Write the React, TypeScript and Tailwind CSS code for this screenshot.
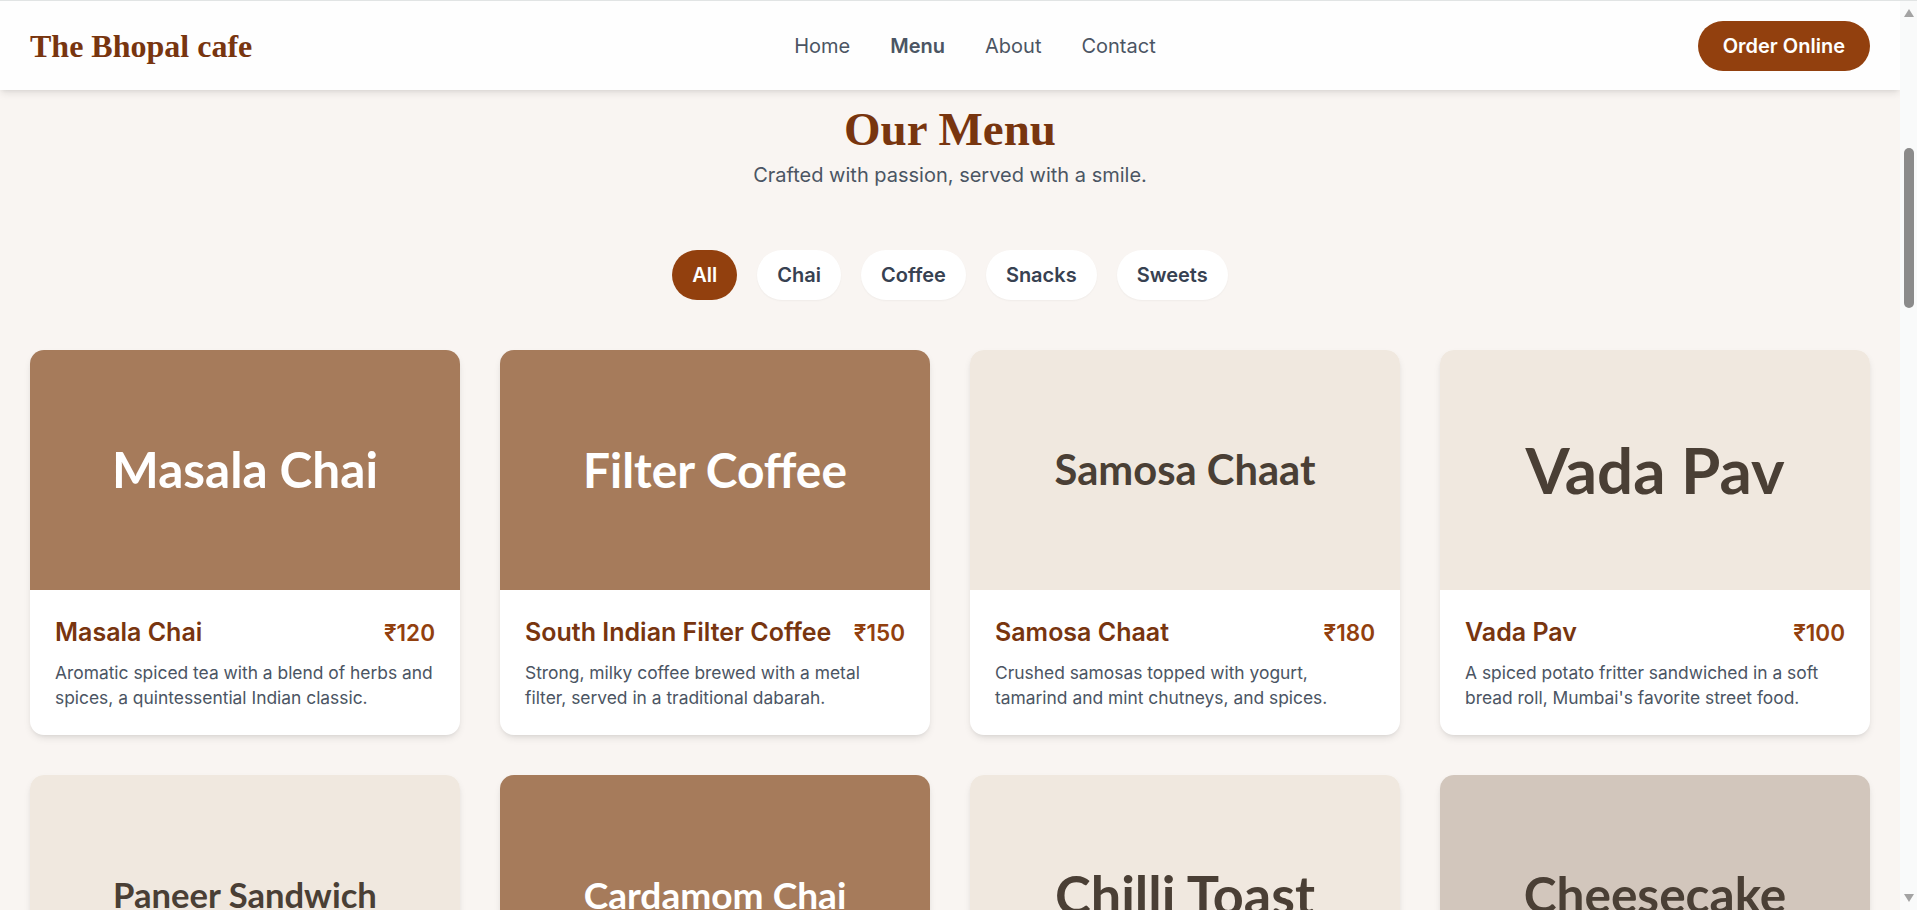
import React, { useMemo } from "react";

type Item = {
  name: string;
  title: string;
  price: number;
  desc: string;
  bg: string;
  fg: string;
};

const items: Item[] = [
  {
    name: "Masala Chai",
    title: "Masala Chai",
    price: 120,
    desc: "Aromatic spiced tea with a blend of herbs and spices, a quintessential Indian classic.",
    bg: "#a67b5b",
    fg: "#ffffff",
  },
  {
    name: "Filter Coffee",
    title: "South Indian Filter Coffee",
    price: 150,
    desc: "Strong, milky coffee brewed with a metal filter, served in a traditional dabarah.",
    bg: "#a67b5b",
    fg: "#ffffff",
  },
  {
    name: "Samosa Chaat",
    title: "Samosa Chaat",
    price: 180,
    desc: "Crushed samosas topped with yogurt, tamarind and mint chutneys, and spices.",
    bg: "#f0e8df",
    fg: "#4a3f35",
  },
  {
    name: "Vada Pav",
    title: "Vada Pav",
    price: 100,
    desc: "A spiced potato fritter sandwiched in a soft bread roll, Mumbai's favorite street food.",
    bg: "#f0e8df",
    fg: "#4a3f35",
  },
  {
    name: "Paneer Sandwich",
    title: "Paneer Sandwich",
    price: 160,
    desc: "Grilled sandwich stuffed with spiced paneer, onions and green chutney.",
    bg: "#f0e8df",
    fg: "#4a3f35",
  },
  {
    name: "Cardamom Chai",
    title: "Cardamom Chai",
    price: 130,
    desc: "Fragrant tea infused with freshly crushed green cardamom pods.",
    bg: "#a67b5b",
    fg: "#ffffff",
  },
  {
    name: "Chilli Toast",
    title: "Chilli Toast",
    price: 140,
    desc: "Crispy toast topped with cheese, green chillies and fresh coriander.",
    bg: "#f0e8df",
    fg: "#4a3f35",
  },
  {
    name: "Cheesecake",
    title: "Cheesecake",
    price: 220,
    desc: "Creamy baked cheesecake on a buttery biscuit base, a sweet finish.",
    bg: "#d2c6bc",
    fg: "#4a3f35",
  },
];

const TARGET_INK_WIDTH = 260;

function fitSize(text: string): number {
  try {
    const c = document.createElement("canvas");
    const ctx = c.getContext("2d");
    if (!ctx) return 46;
    ctx.font = "700 100px Lato";
    const m = ctx.measureText(text);
    const ink =
      (m.actualBoundingBoxLeft || 0) + (m.actualBoundingBoxRight || 0) ||
      m.width;
    return (100 * TARGET_INK_WIDTH) / ink;
  } catch {
    return 46;
  }
}

function Card({ item }: { item: Item }) {
  const size = useMemo(() => fitSize(item.name), [item.name]);
  return (
    <div className="bg-white rounded-[14px] shadow-[0_4px_8px_-2px_rgba(0,0,0,0.12),0_2px_4px_-2px_rgba(0,0,0,0.08)] overflow-hidden">
      <div
        className="h-[240px] flex items-center justify-center font-['Lato',sans-serif] font-bold leading-none"
        style={{ backgroundColor: item.bg, color: item.fg, fontSize: `${size}px` }}
      >
        {item.name}
      </div>
      <div className="p-[25px]">
        <div className="flex items-baseline justify-between gap-[12px]">
          <h3 className="text-[25px] leading-[35px] font-semibold text-[#78350f]">
            {item.title}
          </h3>
          <span className="text-[22.5px] leading-[35px] font-semibold text-[#92400e]">
            ₹{item.price}
          </span>
        </div>
        <p className="mt-[10px] text-[17.4px] leading-[25px] text-[#4b5563]">
          {item.desc}
        </p>
      </div>
    </div>
  );
}

function Scrollbar() {
  return (
    <div className="w-[17px] h-full shrink-0 bg-[#f9fafa] flex flex-col items-center py-[8px]">
      <svg width="10" height="8" viewBox="0 0 10 8">
        <path d="M5 0 L10 8 L0 8 Z" fill="#a3a3a3" />
      </svg>
      <div className="mt-[131px] w-[10px] h-[160px] rounded-full bg-[#8b8b8b]" />
      <div className="flex-1" />
      <svg width="10" height="8" viewBox="0 0 10 8">
        <path d="M0 0 L10 0 L5 8 Z" fill="#a3a3a3" />
      </svg>
    </div>
  );
}

export default function App() {
  const cats = ["All", "Chai", "Coffee", "Snacks", "Sweets"];
  return (
    <div className="h-screen flex overflow-hidden border-t border-[#e1e4e4] bg-[#f9f5f2] font-['Inter',sans-serif]">
      <div className="flex-1 min-w-0 h-full flex flex-col overflow-hidden">
        <header className="relative z-10 shrink-0 h-[89px] bg-white/90 shadow-[0_4px_8px_-1px_rgba(0,0,0,0.1),0_2px_4px_-2px_rgba(0,0,0,0.08)] flex items-center justify-between px-[30px]">
          <div className="font-['Liberation_Serif',serif] font-bold text-[32px] leading-none text-[#78350f]">
            The Bhopal cafe
          </div>
          <nav className="flex items-center gap-[40px] text-[20px] leading-[30px] text-[#4b5563]">
            <a>Home</a>
            <a className="font-semibold">Menu</a>
            <a>About</a>
            <a>Contact</a>
          </nav>
          <button className="bg-[#92400e] text-white font-semibold text-[20px] leading-[30px] px-[25px] py-[10px] rounded-full">
            Order Online
          </button>
        </header>

        <main className="pt-[14px] pb-[80px]">
          <div className="text-center">
            <h2 className="font-['Liberation_Serif',serif] font-bold text-[47px] leading-[50px] text-[#78350f]">
              Our Menu
            </h2>
            <p className="mt-[4px] text-[20px] leading-[35px] text-[#4b5563]">
              Crafted with passion, served with a smile.
            </p>
          </div>

          <div className="mt-[57px] flex justify-center gap-[20px]">
            {cats.map((c, i) => (
              <button
                key={c}
                className={
                  i === 0
                    ? "h-[50px] px-[20px] rounded-full bg-[#92400e] text-white text-[20px] font-semibold"
                    : "h-[50px] px-[20px] rounded-full bg-white text-[#374151] text-[20px] font-semibold shadow-[0_1px_2px_rgba(0,0,0,0.04)]"
                }
              >
                {c}
              </button>
            ))}
          </div>

          <div className="mt-[50px] px-[30px] grid grid-cols-4 gap-[40px]">
            {items.map((it) => (
              <Card key={it.name} item={it} />
            ))}
          </div>
        </main>
      </div>
      <Scrollbar />
    </div>
  );
}
